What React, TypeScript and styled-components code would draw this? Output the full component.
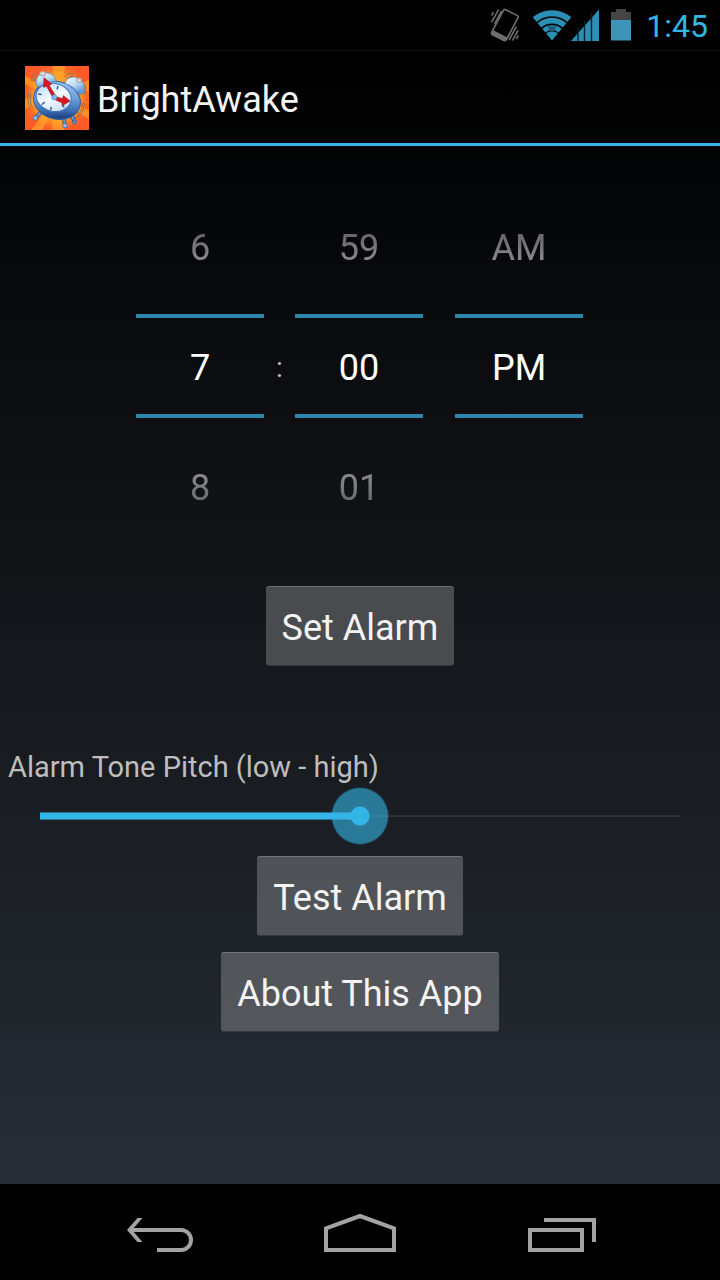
import React, { useState } from "react";
import styled, { createGlobalStyle } from "styled-components";

const blue = "#33b5e5";

const GlobalStyle = createGlobalStyle`
  *, *::before, *::after { box-sizing: border-box; }
  body {
    margin: 0;
    background: #000;
    color: #f3f3f3;
    font-family: Roboto, "Liberation Sans", sans-serif;
  }
  button, input { font-family: inherit; color: inherit; }
`;

const Screen = styled.div`
  min-height: 100vh;
  display: flex;
  flex-direction: column;
`;

const StatusBar = styled.div`
  height: 50px;
  padding-right: 12px;
  display: flex;
  align-items: center;
  justify-content: flex-end;
  background: #000;
`;

const StatusIcons = styled.div`
  display: flex;
  align-items: center;
  margin-right: 15px;
`;

const StatusIcon = styled.svg<{ $gap?: number }>`
  display: block;
  margin-right: ${(p) => p.$gap ?? 0}px;
`;

const Clock = styled.time`
  color: ${blue};
  font-size: 32px;
  line-height: 48px;
  padding-top: 2px;
`;

const AppWindow = styled.div`
  flex: 1;
  display: flex;
  flex-direction: column;
  background: linear-gradient(#000, #272d35);
`;

const ActionBar = styled.header`
  height: 96px;
  padding: 2px 0 0 25px;
  display: flex;
  align-items: center;
  gap: 8px;
  border-top: 1px solid #0e0e0e;
  border-bottom: 3px solid ${blue};
`;

const Title = styled.h1`
  margin: 0;
  padding-top: 4px;
  font-size: 36px;
  line-height: 44px;
  font-weight: 400;
`;

const Content = styled.main`
  flex: 1;
  display: flex;
  flex-direction: column;
  align-items: center;
  padding: 32px 0;
`;

const TimePicker = styled.div`
  display: flex;
  align-items: center;
  margin-bottom: 32px;
  padding-right: 1px;
`;

const Column = styled.div<{ $spaced?: boolean }>`
  display: flex;
  flex-direction: column;
  width: 128px;
  margin-left: ${(p) => (p.$spaced ? 32 : 0)}px;
`;

const Neighbour = styled.button<{ $side: "above" | "below" }>`
  height: 136px;
  padding: 4px 0 0;
  border: 0;
  background: none;
  color: #fff;
  font-size: 36px;
  mask-image: linear-gradient(
    ${(p) => (p.$side === "above" ? "to bottom" : "to top")},
    rgba(0, 0, 0, 0.1),
    rgba(0, 0, 0, 0.8)
  );
`;

const Value = styled.input`
  width: 100%;
  height: 104px;
  padding: 4px 0 0;
  border: solid #2a87ab;
  border-width: 4px 0;
  background: none;
  color: #fff;
  font-size: 36px;
  text-align: center;
  outline: none;
`;

const Divider = styled.span`
  width: 31px;
  padding-top: 4px;
  font-size: 28px;
  line-height: 36px;
  text-align: center;
  color: #bebebe;
`;

const HoloButton = styled.button`
  height: 80px;
  padding: 4px 16px 0;
  border: 1px solid transparent;
  border-width: 1px 0;
  border-top-color: rgba(255, 255, 255, 0.2);
  border-bottom-color: rgba(0, 0, 0, 0.3);
  border-radius: 3px;
  background: rgba(200, 200, 200, 0.3);
  font-size: 36px;
  line-height: 44px;
`;

const PitchSection = styled.section`
  align-self: stretch;
  display: flex;
  flex-direction: column;
  margin: 82px 0 12px;
`;

const PitchLabel = styled.label`
  padding-left: 8px;
  margin-bottom: 2px;
  font-size: 29px;
  line-height: 38px;
  color: #bebebe;
`;

const Slider = styled.input`
  appearance: none;
  height: 56px;
  margin: 0 12px;
  background: none;
  outline: none;

  &::-webkit-slider-runnable-track {
    height: 56px;
    background:
      linear-gradient(${blue}, ${blue}) 28px 50% / calc((100% - 56px) * var(--level)) 6px no-repeat,
      linear-gradient(#25718f, #25718f) 28px 50% / calc((100% - 56px) * var(--level)) 8px no-repeat,
      linear-gradient(#2c2f34, #2c2f34) 50% 50% / calc(100% - 56px) 2px no-repeat;
  }

  &::-webkit-slider-thumb {
    appearance: none;
    width: 56px;
    height: 56px;
    border-radius: 50%;
    background: radial-gradient(circle, ${blue} 9px, rgba(51, 181, 229, 0.6) 10px);
    box-shadow: 0 0 2px rgba(51, 181, 229, 0.5);
  }
`;

const Actions = styled.div`
  display: flex;
  flex-direction: column;
  align-items: center;
  gap: 16px;
`;

const NavBar = styled.nav`
  height: 96px;
  padding: 0 80px;
  display: flex;
  justify-content: space-between;
  background: #000;
`;

const NavButton = styled.button`
  width: 160px;
  padding: 0;
  border: 0;
  background: none;
  display: flex;
  align-items: center;
  justify-content: center;
`;

const NavIcon = styled.svg.attrs({ width: 96, height: 48, viewBox: "0 0 96 48", "aria-hidden": true })`
  fill: none;
  stroke: #a3a3a3;
  stroke-width: 4;
`;

function VibrateIcon() {
  return (
    <StatusIcon $gap={13} width="30" height="36" viewBox="0 0 30 36" fill="none" stroke="#6e6e6e" aria-hidden="true">
      <path d="M13.6 3.2 Q14.4 2 15.8 2.7 L27.4 8.6 Q28.7 9.4 28 10.6 L16.6 32.4 Q15.6 34.4 13.6 33.4 L2.6 27.8 Q1 26.8 1.8 25.2Z" strokeWidth="1.6" />
      <path d="M3 23.6 L17 30.8 L16 33 Q15.2 34.4 13.6 33.6 L2.4 27.8 Q1 27 1.7 25.4Z" fill="#6e6e6e" strokeWidth="1" />
      <path d="M1.6 8.6 L3.4 5.2 M1.6 15.2 L8.6 2.6 M4.4 17.4 L11.6 3.8 M19 33 L26.4 19.6 M22.4 33.6 L28.2 23.4 M26.4 32 L28.4 28.4" strokeWidth="1.6" />
    </StatusIcon>
  );
}

function WifiIcon() {
  return (
    <StatusIcon width="38" height="36" viewBox="0 0 39 36" aria-hidden="true">
      <defs>
        <clipPath id="fan">
          <path d="M19.5 34 L-1 9 V0 H40 V9Z" />
        </clipPath>
      </defs>
      <g clipPath="url(#fan)" fill="none" stroke="#2b8fb6">
        <circle cx="19.5" cy="33.5" r="27.6" strokeWidth="6" />
        <circle cx="19.5" cy="33.5" r="20" strokeWidth="6" />
        <circle cx="19.5" cy="33.5" r="12.8" strokeWidth="5" />
        <circle cx="19.5" cy="33.5" r="4.6" strokeWidth="9.2" />
      </g>
      <path d="M14.5 19.5 H24.5 L19.5 26Z" fill="#1c5a73" />
    </StatusIcon>
  );
}

function SignalIcon() {
  return (
    <StatusIcon $gap={12} width="28" height="36" viewBox="0 0 28 36" aria-hidden="true">
      <path d="M0 34 L28 2.5 V34Z" fill="#2b8fb6" />
      <path d="M7 20 V34 M13.5 14 V34 M20.5 6 V34" stroke="#06222d" strokeWidth="1.4" />
    </StatusIcon>
  );
}

function BatteryIcon() {
  return (
    <StatusIcon width="20" height="36" viewBox="0 0 20 36" aria-hidden="true">
      <path d="M5 2 H15 V5 H20 V13 H0 V5 H5Z" fill="#444" />
      <path d="M0 13 H20 V33.5 H0Z" fill="#3c94ba" />
    </StatusIcon>
  );
}

function AlarmLogo() {
  return (
    <svg width="64" height="64" viewBox="0 0 192 192" aria-hidden="true">
      <defs>
        <radialGradient id="glow">
          <stop offset="0" stopColor="#ffd02e" />
          <stop offset="0.7" stopColor="#ff9a26" />
          <stop offset="1" stopColor="#fd6a26" stopOpacity="0" />
        </radialGradient>
        <linearGradient id="metal" x1="0" y1="0" x2="0.3" y2="1">
          <stop offset="0" stopColor="#a9cdf2" />
          <stop offset="0.55" stopColor="#6c9fdb" />
          <stop offset="0.85" stopColor="#3f70b4" />
          <stop offset="1" stopColor="#234a8c" />
        </linearGradient>
        <linearGradient id="bell" x1="0" y1="0" x2="0.5" y2="1">
          <stop offset="0" stopColor="#f2faff" />
          <stop offset="0.55" stopColor="#bcdcf6" />
          <stop offset="1" stopColor="#5f98d6" />
        </linearGradient>
        <linearGradient id="dial" x1="0" y1="0" x2="1" y2="1">
          <stop offset="0" stopColor="#a9d3f8" />
          <stop offset="0.5" stopColor="#f4fbff" />
          <stop offset="1" stopColor="#b4d6f5" />
        </linearGradient>
      </defs>
      <rect width="192" height="192" fill="#fd5a28" />
      <circle cx="96" cy="96" r="104" fill="url(#glow)" opacity="0.85" />
      <path
        d="M96 96 L82 0 H122Z M96 96 L192 40 V74Z M96 96 L192 132 V160Z M96 96 L118 192 H80Z M96 96 L52 192 H18Z M96 96 L0 128 V98Z M96 96 L0 54 V28Z"
        fill="#ffae2a"
        opacity="0.6"
      />
      <g fill="none" stroke="#8a7050" strokeWidth="3" strokeLinecap="round">
        <path d="M20 44 Q20 24 38 20 M27 46 Q28 32 38 28 M120 32 Q130 18 146 24 M126 38 Q134 28 142 30 M180 58 Q186 70 178 86" />
        <path d="M10 80 Q4 106 16 126 M17 84 Q12 106 22 122 M176 108 Q182 134 160 152 M170 112 Q175 132 158 144 M164 146 Q158 154 148 158" />
      </g>
      <g stroke="#234a8c" strokeLinecap="round">
        <path d="M48 138 L32 156 M116 152 L120 180 M138 142 L148 166" strokeWidth="11" />
        <path d="M48 138 L32 156 M116 152 L120 180 M138 142 L148 166" stroke="#6c9fdb" strokeWidth="6" />
      </g>
      <circle cx="31" cy="156" r="7" fill="#8ebbe8" stroke="#2f5da2" strokeWidth="2" />
      <circle cx="120" cy="179" r="7" fill="#8ebbe8" stroke="#2f5da2" strokeWidth="2" />
      <circle cx="149" cy="168" r="6" fill="#5b90d2" stroke="#2f5da2" strokeWidth="2" />
      <ellipse cx="96" cy="103" rx="71" ry="56" transform="rotate(14 96 103)" fill="url(#metal)" stroke="#2d5ca6" strokeWidth="3" />
      <path d="M34 52 Q32 22 62 20 Q90 22 94 46 Q78 46 66 54 Q48 66 36 60Z" fill="url(#bell)" stroke="#4c80c4" strokeWidth="2" />
      <path d="M120 54 Q122 32 150 33 Q182 42 178 78 Q168 90 156 78 Q142 58 120 54Z" fill="url(#bell)" stroke="#4c80c4" strokeWidth="2" />
      <ellipse cx="53" cy="23" rx="9" ry="7" fill="#d8d4cf" stroke="#8f8a8c" strokeWidth="2" />
      <ellipse cx="162" cy="43" rx="8" ry="7" fill="#d8d4cf" stroke="#8f8a8c" strokeWidth="2" />
      <ellipse cx="86" cy="94" rx="53" ry="42" transform="rotate(14 86 94)" fill="url(#dial)" stroke="#3f70b4" strokeWidth="3" />
      <path d="M99 60 L96 70 M40 84 L50 86 M50 116 L59 108 M77 132 L79 123 M118 124 L111 117" stroke="#2c5290" strokeWidth="4" />
      <g fill="#de1620" stroke="#9c1222" strokeWidth="2" strokeLinejoin="round">
        <path d="M57 35 L80 54 L72 58 L90 86 L81 90 L65 61 L56 64Z" />
        <path d="M135 105 L112 119 L111 110 L92 102 L96 93 L113 98 L115 89Z" />
      </g>
      <circle cx="88" cy="94" r="8" fill="#82b9ef" stroke="#4c80c4" strokeWidth="2" />
    </svg>
  );
}

const pad = (n: number) => String(n).padStart(2, "0");
const wrapHour = (n: number) => ((n + 11) % 12) + 1;
const wrapMinute = (n: number) => (n + 60) % 60;

export default function App() {
  const [hour, setHour] = useState(7);
  const [minute, setMinute] = useState(0);
  const [evening, setEvening] = useState(true);
  const [pitch, setPitch] = useState(50);

  return (
    <Screen>
      <GlobalStyle />
      <StatusBar>
        <StatusIcons>
          <VibrateIcon />
          <WifiIcon />
          <SignalIcon />
          <BatteryIcon />
        </StatusIcons>
        <Clock>1:45</Clock>
      </StatusBar>

      <AppWindow>
        <ActionBar>
          <AlarmLogo />
          <Title>BrightAwake</Title>
        </ActionBar>

        <Content>
          <TimePicker role="group" aria-label="Alarm time">
            <Column>
              <Neighbour $side="above" onClick={() => setHour(wrapHour(hour - 1))}>{wrapHour(hour - 1)}</Neighbour>
              <Value aria-label="Hour" value={hour} readOnly />
              <Neighbour $side="below" onClick={() => setHour(wrapHour(hour + 1))}>{wrapHour(hour + 1)}</Neighbour>
            </Column>
            <Divider>:</Divider>
            <Column>
              <Neighbour $side="above" onClick={() => setMinute(wrapMinute(minute - 1))}>{pad(wrapMinute(minute - 1))}</Neighbour>
              <Value aria-label="Minute" value={pad(minute)} readOnly />
              <Neighbour $side="below" onClick={() => setMinute(wrapMinute(minute + 1))}>{pad(wrapMinute(minute + 1))}</Neighbour>
            </Column>
            <Column $spaced>
              <Neighbour $side="above" disabled={!evening} onClick={() => setEvening(false)}>{evening ? "AM" : ""}</Neighbour>
              <Value aria-label="AM or PM" value={evening ? "PM" : "AM"} readOnly />
              <Neighbour $side="below" disabled={evening} onClick={() => setEvening(true)}>{evening ? "" : "PM"}</Neighbour>
            </Column>
          </TimePicker>

          <HoloButton>Set Alarm</HoloButton>

          <PitchSection>
            <PitchLabel htmlFor="pitch">Alarm Tone Pitch (low - high)</PitchLabel>
            <Slider
              id="pitch"
              type="range"
              min={0}
              max={100}
              value={pitch}
              onChange={(e) => setPitch(Number(e.target.value))}
              style={{ "--level": pitch / 100 } as React.CSSProperties}
            />
          </PitchSection>

          <Actions>
            <HoloButton>Test Alarm</HoloButton>
            <HoloButton>About This App</HoloButton>
          </Actions>
        </Content>
      </AppWindow>

      <NavBar>
        <NavButton aria-label="Back">
          <NavIcon>
            <path d="M18 22 H69 A10 10 0 0 1 69 42 H45" />
            <path d="M15 22 L25.5 10 H30.5 L20 22 L30.5 34 H25.5Z" fill="#a3a3a3" stroke="none" />
          </NavIcon>
        </NavButton>
        <NavButton aria-label="Home">
          <NavIcon>
            <path d="M14 42 V20.4 L48 8 L82 20.4 V42Z" />
          </NavIcon>
        </NavButton>
        <NavButton aria-label="Recent apps">
          <NavIcon>
            <path d="M18 22 H70 V42 H18Z M32 12 H82 V34" />
          </NavIcon>
        </NavButton>
      </NavBar>
    </Screen>
  );
}
